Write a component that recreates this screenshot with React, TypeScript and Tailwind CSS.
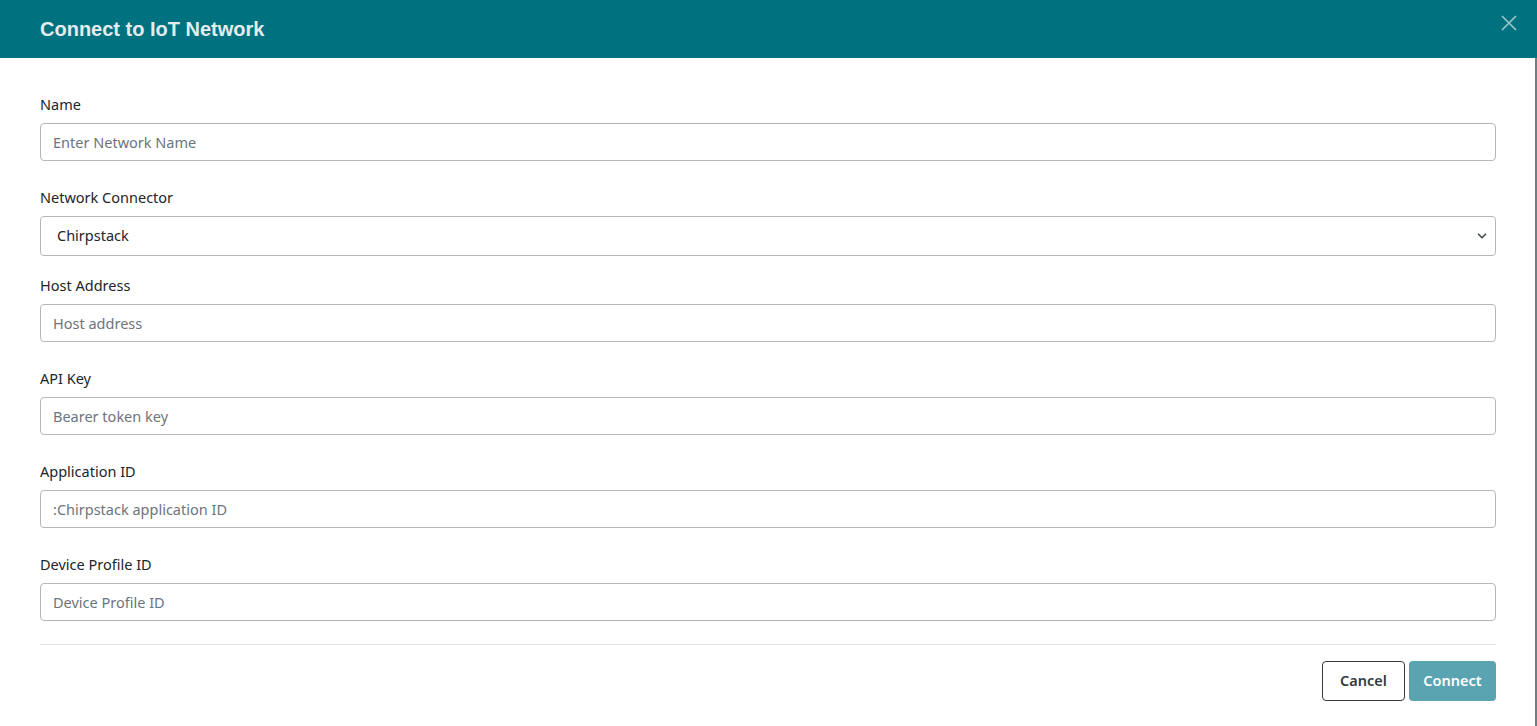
import { ChevronDown } from 'lucide-react'

type FieldProps = {
  label: string
  placeholder: string
  className?: string
}

const Field = ({ label, placeholder, className = '' }: FieldProps) => (
  <div className={className}>
    <label className="block text-[14.5px] leading-5 text-[#212529] mb-[9px]">{label}</label>
    <input
      className="block w-full h-[38px] rounded-[4px] border border-[#b7b7b7] px-3 text-[14.5px] text-[#212529] placeholder:text-[#6c757d] outline-none"
      placeholder={placeholder}
    />
  </div>
)

const App = () => {
  return (
    <div className="w-[1537px] h-[726px] bg-white flex font-['Noto_Sans',sans-serif] overflow-hidden">
      <div className="w-[1535px] h-full flex flex-col">
        <div className="h-[58px] bg-[#00717f] flex items-center justify-between pl-10 pr-[18px]">
          <h1 className="font-['Liberation_Sans',Arial,sans-serif] font-bold text-[20px] text-[#e3ecee]">Connect to IoT Network</h1>
          <svg width="16" height="16" viewBox="0 0 16 16" className="mb-3" fill="none" stroke="#9fc6cc" strokeWidth="1.6">
            <path d="M1 1 L15 15 M15 1 L1 15" />
          </svg>
        </div>

        <div className="flex-1 pl-10 pr-[39px] pt-[36px]">
          <Field label="Name" placeholder="Enter Network Name" />

          <div className="mt-[26px]">
            <label className="block text-[14.5px] leading-5 text-[#212529] mb-[9px]">Network Connector</label>
            <div className="relative">
              <select className="block w-full h-[40px] appearance-none rounded-[4px] border border-[#b7b7b7] pl-4 pr-8 text-[14.5px] text-[#212529] bg-white outline-none">
                <option>Chirpstack</option>
              </select>
              <ChevronDown className="absolute right-[7px] top-[13px] w-[14px] h-[14px] text-[#4a4f55] pointer-events-none" strokeWidth={3} />
            </div>
          </div>

          <Field label="Host Address" placeholder="Host address" className="mt-[19px]" />
          <Field label="API Key" placeholder="Bearer token key" className="mt-[26px]" />
          <Field label="Application ID" placeholder=":Chirpstack application ID" className="mt-[26px]" />
          <Field label="Device Profile ID" placeholder="Device Profile ID" className="mt-[26px]" />

          <div className="mt-[23px] border-t border-[#e3e3e3]" />

          <div className="flex justify-end gap-1 mt-4">
            <button className="h-10 w-[83px] rounded-[4px] border border-[#343a40] text-[14.5px] font-semibold text-[#343a40] bg-white">
              Cancel
            </button>
            <button className="h-10 w-[87px] rounded-[4px] bg-[#5aa3b0] text-[14.5px] font-semibold text-white">Connect</button>
          </div>
        </div>
      </div>
      <div className="w-[2px] h-full flex flex-col">
        <div className="h-[58px] bg-[#00717f]" />
        <div className="flex-1 bg-[#6e7f82]" />
      </div>
    </div>
  )
}

export default App
